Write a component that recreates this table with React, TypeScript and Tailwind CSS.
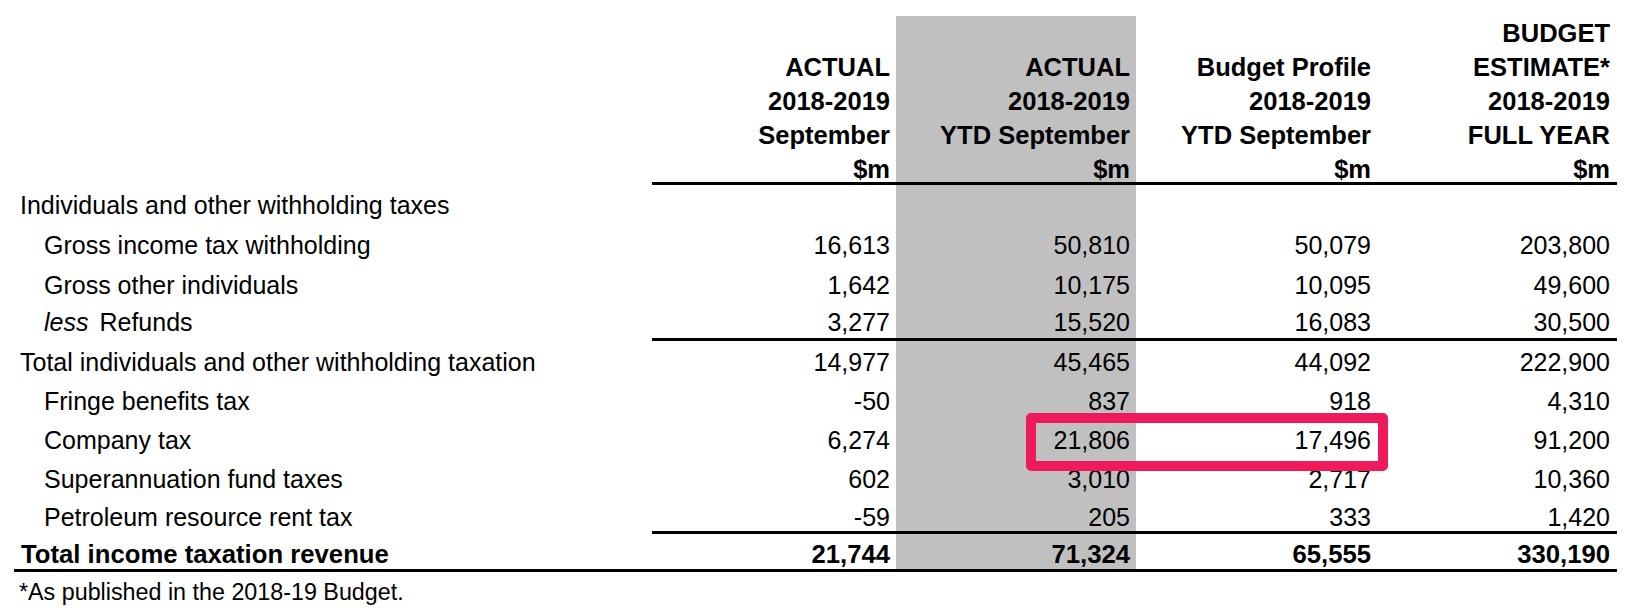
import React from "react";

type RowDef = {
  label: React.ReactNode;
  indent?: boolean;
  values?: string[];
  h: number;
  pt: number;
  border?: "none" | "num" | "full";
  bold?: boolean;
};

const rows: RowDef[] = [
  { label: "Individuals and other withholding taxes", h: 40, pt: 7 },
  { label: "Gross income tax withholding", indent: true, values: ["16,613", "50,810", "50,079", "203,800"], h: 40, pt: 7 },
  { label: "Gross other individuals", indent: true, values: ["1,642", "10,175", "10,095", "49,600"], h: 40, pt: 7 },
  {
    label: (
      <>
        <span className="italic">less</span>
        <span className="ml-[11px]">Refunds</span>
      </>
    ),
    indent: true,
    values: ["3,277", "15,520", "16,083", "30,500"],
    h: 36,
    pt: 4,
    border: "num",
  },
  { label: "Total individuals and other withholding taxation", values: ["14,977", "45,465", "44,092", "222,900"], h: 39, pt: 8 },
  { label: "Fringe benefits tax", indent: true, values: ["-50", "837", "918", "4,310"], h: 39, pt: 8 },
  { label: "Company tax", indent: true, values: ["6,274", "21,806", "17,496", "91,200"], h: 39, pt: 8 },
  { label: "Superannuation fund taxes", indent: true, values: ["602", "3,010", "2,717", "10,360"], h: 39, pt: 8 },
  { label: "Petroleum resource rent tax", indent: true, values: ["-59", "205", "333", "1,420"], h: 37, pt: 7, border: "num" },
  { label: "Total income taxation revenue", values: ["21,744", "71,324", "65,555", "330,190"], h: 38, pt: 7, border: "full", bold: true },
];

const colClasses = [
  "w-[244px] pr-[6px]",
  "w-[240px] pr-[6px] bg-[#c0c0c0]",
  "w-[241px] pr-[6px]",
  "w-[240px] pr-[7px]",
];

function Row({ r }: { r: RowDef }) {
  const vals = r.values ?? ["", "", "", ""];
  const textCls = r.bold ? "font-bold text-[25.7px]" : "text-[25px]";
  return (
    <div
      className={`flex ${r.border === "full" ? "border-b-[3px] border-black" : ""}`}
      style={{ height: r.h }}
    >
      <div
        className={`w-[638px] shrink-0 leading-[26px] whitespace-nowrap ${textCls} ${
          r.indent ? "pl-[30px]" : r.bold ? "pl-[7px]" : "pl-[6px]"
        }`}
        style={{ paddingTop: r.pt }}
      >
        {r.label}
      </div>
      <div className={`flex ${r.border === "num" ? "border-b-[3px] border-black" : ""}`}>
        {vals.map((v, i) => (
          <div
            key={i}
            className={`${colClasses[i]} text-right leading-[26px] whitespace-nowrap ${textCls}`}
            style={{ paddingTop: r.pt }}
          >
            {v}
          </div>
        ))}
      </div>
    </div>
  );
}

const headers: string[][] = [
  ["ACTUAL", "2018-2019", "September", "$m"],
  ["ACTUAL", "2018-2019", "YTD September", "$m"],
  ["Budget Profile", "2018-2019", "YTD September", "$m"],
  ["BUDGET", "ESTIMATE*", "2018-2019", "FULL YEAR", "$m"],
];

export default function App() {
  return (
    <div className="relative w-[1627px] h-[613px] bg-white text-black font-['Liberation_Sans',Arial,sans-serif] overflow-hidden">
      <div className="pl-[14px] w-[1617px]">
        {/* Header */}
        <div className="flex pt-[16px]">
          <div className="w-[638px] shrink-0" />
          <div className="flex h-[169px] border-b-[3px] border-black">
            {headers.map((lines, i) => (
              <div key={i} className={`${colClasses[i]} flex flex-col justify-end items-end`}>
                <div className="-mb-[4px] text-right font-bold text-[25.5px] leading-[34px] whitespace-nowrap">
                  {lines.map((l, j) => (
                    <div key={j}>{l}</div>
                  ))}
                </div>
              </div>
            ))}
          </div>
        </div>
        {/* Body */}
        {rows.map((r, i) => (
          <Row key={i} r={r} />
        ))}
        {/* Footnote */}
        <div className="mt-[8px] pl-[5px] text-[23.3px] leading-[24px]">*As published in the 2018-19 Budget.</div>
      </div>
      {/* Highlight box */}
      <div className="absolute left-[1026px] top-[413px] w-[362px] h-[58px] border-[10px] border-[#ee1a5b] rounded-[5px]" />
    </div>
  );
}
